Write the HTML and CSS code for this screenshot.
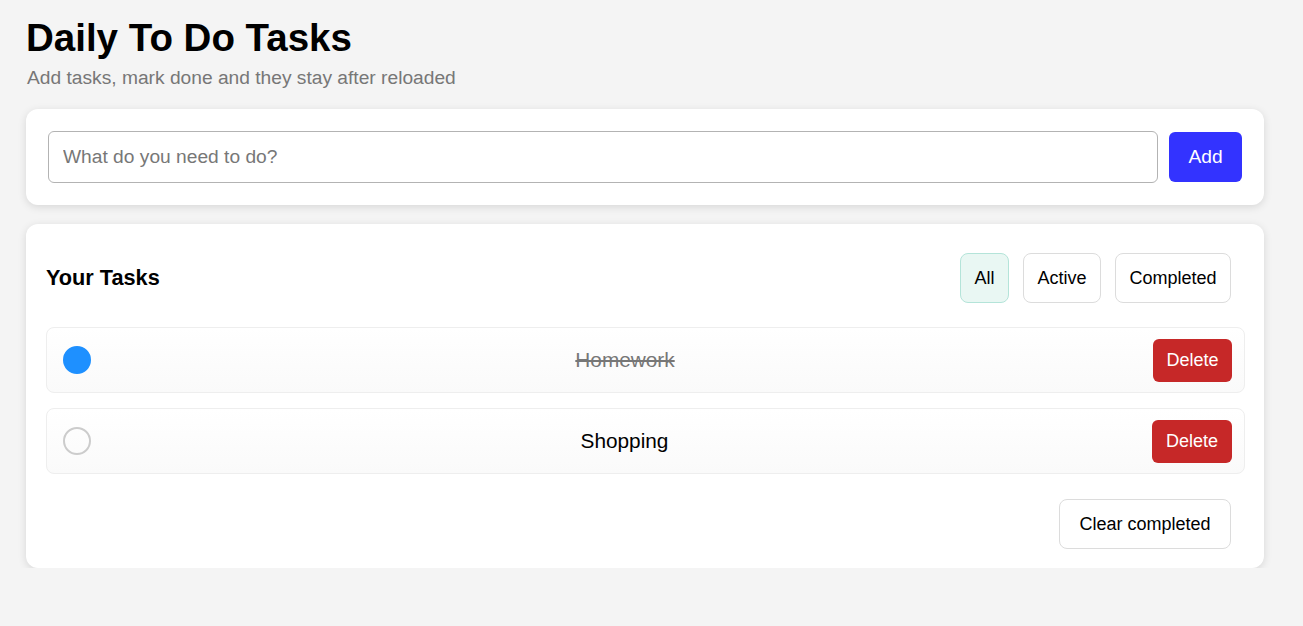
FILE: index.html
```html
<!DOCTYPE html>
<html lang="en">
<head>
<meta charset="utf-8">
<title>Daily To Do Tasks</title>
<link rel="stylesheet" href="styles.css">
</head>
<body>
<main class="app">
  <header class="page-head">
    <h1 class="title">Daily To Do Tasks</h1>
    <p class="subtitle">Add tasks, mark done and they stay after reloaded</p>
  </header>

  <section class="card add-card">
    <form class="add-form" onsubmit="return false;">
      <input class="task-input" type="text" placeholder="What do you need to do?">
      <button class="btn btn-add" type="submit">Add</button>
    </form>
  </section>

  <section class="card list-card">
    <div class="list-head">
      <h2 class="list-title">Your Tasks</h2>
      <div class="filters">
        <button class="btn btn-filter is-active">All</button>
        <button class="btn btn-filter">Active</button>
        <button class="btn btn-filter">Completed</button>
      </div>
    </div>

    <ul class="tasks">
      <li class="task is-done">
        <span class="check checked"></span>
        <span class="task-text">Homework</span>
        <button class="btn btn-delete">Delete</button>
      </li>
      <li class="task">
        <span class="check"></span>
        <span class="task-text">Shopping</span>
        <button class="btn btn-delete wide">Delete</button>
      </li>
    </ul>

    <div class="list-foot">
      <button class="btn btn-filter btn-clear">Clear completed</button>
    </div>
  </section>
</main>
</body>
</html>
```

FILE: styles.css
```css
* { box-sizing: border-box; }

html, body {
  margin: 0;
  padding: 0;
  background: #f4f4f4;
}

body {
  font-family: "Liberation Sans", Arial, sans-serif;
  color: #000;
}

.app {
  width: 1238px;
  margin-left: 26px;
  padding-top: 15px;
}

.title {
  margin: 0;
  font-size: 38.5px;
  font-weight: 700;
  line-height: 46px;
}

.subtitle {
  margin: 5px 0 0 1px;
  font-size: 19.2px;
  line-height: 24px;
  color: #777;
}

.card {
  background: #fff;
  border-radius: 12px;
  box-shadow: 0 2px 8px rgba(0, 0, 0, 0.12);
}

.add-card {
  margin-top: 19px;
  padding: 22px;
}

.add-form {
  display: flex;
  align-items: center;
  gap: 11px;
  margin: 0;
}

.task-input {
  flex: 1;
  height: 52px;
  padding: 0 14px;
  border: 1px solid #b3b3b3;
  border-radius: 6px;
  font-family: inherit;
  font-size: 19.2px;
  color: #000;
  background: #fff;
}

.task-input::placeholder { color: #777; }

.btn {
  font-family: inherit;
  font-size: 18px;
  cursor: pointer;
  border-radius: 6px;
}

.btn-add {
  width: 73px;
  height: 50px;
  border: none;
  background: #3333ff;
  color: #fff;
  font-size: 19.2px;
  padding: 0;
}

.list-card {
  margin-top: 19px;
  padding: 29px 19px 19px 20px;
}

.list-head {
  display: flex;
  align-items: center;
  justify-content: space-between;
  height: 50px;
}

.list-title {
  margin: 0;
  font-size: 21.7px;
  font-weight: 700;
}

.filters {
  display: flex;
  gap: 14px;
  margin-right: 14px;
}

.btn-filter {
  height: 50px;
  padding: 0 13.5px;
  background: #fff;
  border: 1px solid #dcdcdc;
  border-radius: 8px;
  color: #000;
}

.btn-filter.is-active {
  background: #e9f7f3;
  border-color: #b4e4d9;
}

.tasks {
  list-style: none;
  margin: 24px 0 0;
  padding: 0;
  display: flex;
  flex-direction: column;
  gap: 15px;
}

.task {
  display: flex;
  align-items: center;
  height: 66px;
  padding: 0 12px 0 16px;
  border: 1px solid #eeeeee;
  border-radius: 8px;
  background: linear-gradient(#ffffff, #fafafa);
}

.check {
  width: 28px;
  height: 28px;
  border-radius: 50%;
  border: 2px solid #cccccc;
  flex: none;
}

.check.checked {
  background: #1e90ff;
  border-color: #1e90ff;
}

.task-text {
  flex: 1;
  padding-left: 6px;
  text-align: center;
  font-size: 20.8px;
  color: #000;
}

.task.is-done .task-text {
  color: #777;
  text-decoration: line-through;
}

.btn-delete {
  width: 79px;
  height: 43px;
  border: none;
  background: #c62828;
  color: #fff;
  padding: 0;
}

.btn-delete.wide { width: 80px; }

.list-foot {
  display: flex;
  justify-content: flex-end;
  margin-top: 25px;
  padding-right: 14px;
}

.btn-clear {
  padding: 0 19.5px;
}
```
